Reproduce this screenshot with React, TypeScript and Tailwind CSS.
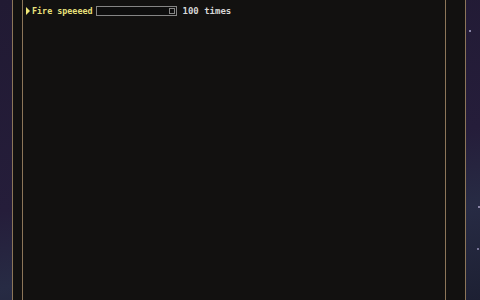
export default function App() {
  return (
    <div className="relative flex h-[300px] w-[480px] overflow-hidden bg-[linear-gradient(170deg,#211a33_0%,#251d3a_55%,#272b44_75%,#1d2033_100%)] font-['DejaVu_Sans_Mono',monospace]">
      {/* stars */}
      <span className="absolute left-[469px] top-[30px] h-[2px] w-[2px] bg-[#8b86a8]" />
      <span className="absolute left-[478px] top-[206px] h-[2px] w-[2px] bg-[#8b86a8]" />
      <span className="absolute left-[477px] top-[248px] h-[2px] w-[2px] bg-[#7a769a]" />

      <div className="ml-[12px] flex h-full w-[454px] border-x border-[#8c7659] bg-[#121110] pl-[9px] pr-[19px]">
        <div className="flex h-full w-[424px] flex-col border-x border-[#8c7659]">
          <div className="flex h-[24px] items-start pl-[3px] pt-[6px]">
            <svg width="4" height="8" viewBox="0 0 4 8" className="mt-[1px]">
              <path d="M0 0 L4 4 L0 8 Z" fill="#f1ea78" />
            </svg>
            <span className="ml-[2px] text-[8.4px] font-bold leading-[10px] text-[#e9e27c]">Fire speeeed</span>
            <div className="ml-[3px] flex h-[10px] w-[81px] items-center justify-end border border-[#858585] bg-[#0e0e0e] pr-[1px]">
              <div className="h-[6px] w-[6px] border border-[#858585]" />
            </div>
            <span className="ml-[6px] text-[9px] font-bold leading-[10px] text-[#d6d6d6]">100 times</span>
          </div>
        </div>
      </div>
    </div>
  );
}
